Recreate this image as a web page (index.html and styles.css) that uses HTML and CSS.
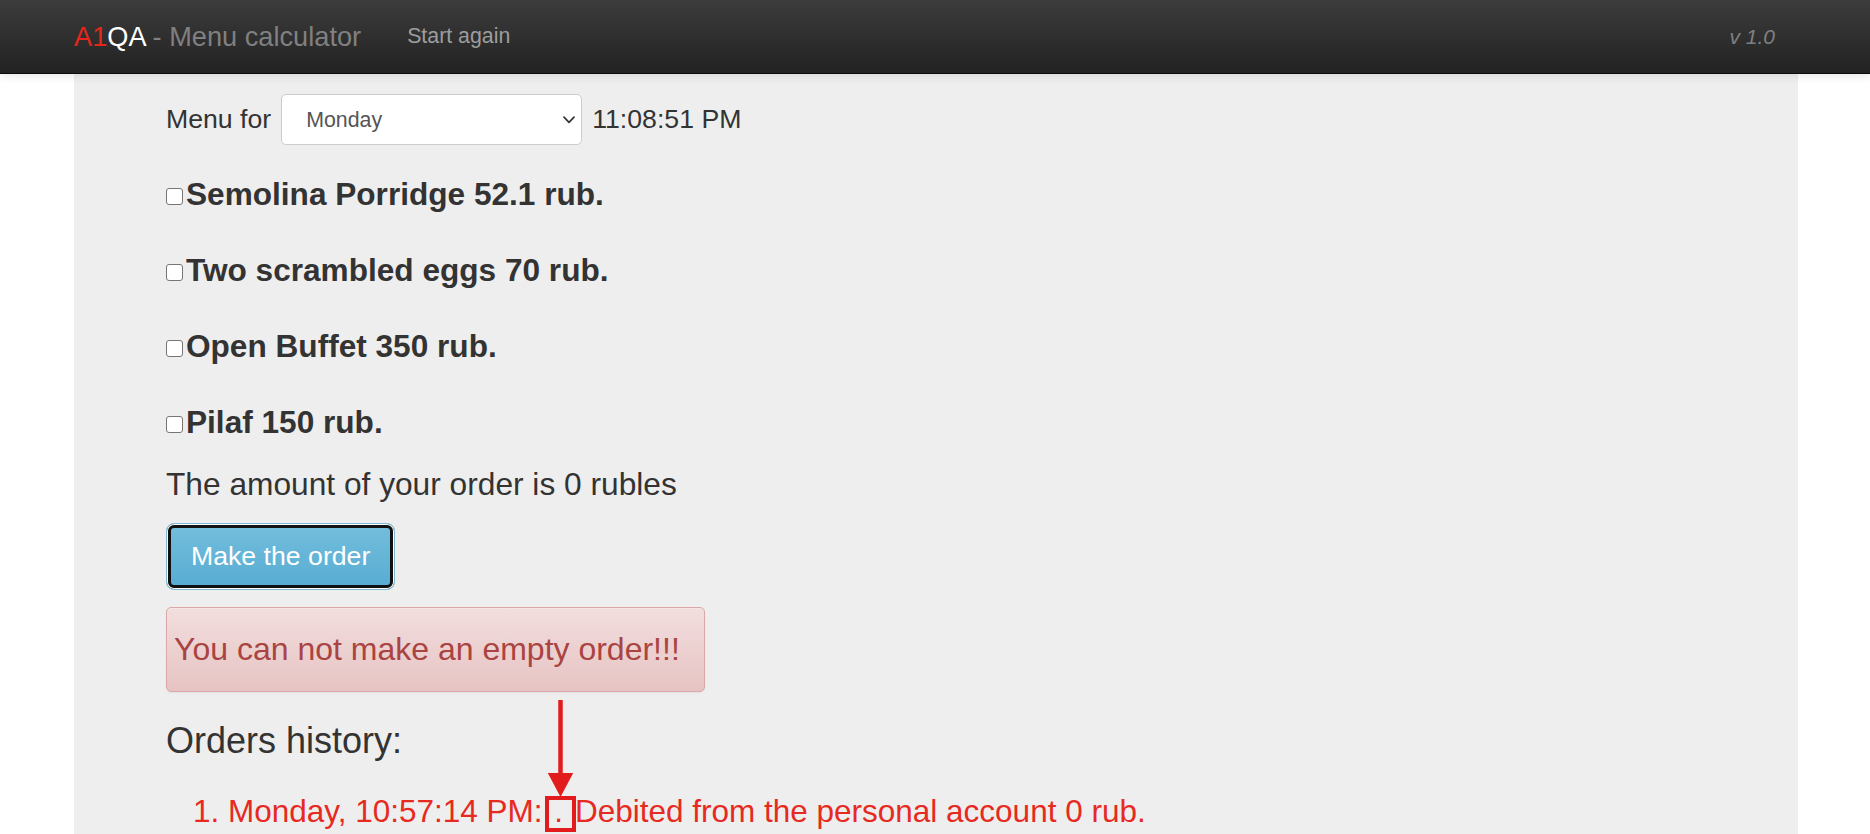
FILE: index.html
```html
<!DOCTYPE html>
<html lang="en">
<head>
<meta charset="utf-8">
<title>A1QA - Menu calculator</title>
<link rel="stylesheet" href="styles.css">
</head>
<body>
<header class="navbar">
  <div class="nav-inner">
    <a class="brand"><span class="a1">A1</span><span class="qa">QA</span> - Menu calculator</a>
    <a class="nav-link">Start again</a>
    <span class="version">v 1.0</span>
  </div>
</header>
<main class="page">
  <div class="menu-row">
    <span>Menu for</span>
    <span class="select-wrap">
      <select class="day-select">
        <option>Monday</option>
        <option>Tuesday</option>
        <option>Wednesday</option>
        <option>Thursday</option>
        <option>Friday</option>
      </select>
      <svg class="chevron" width="12" height="8" viewBox="0 0 12 8" aria-hidden="true"><path d="M1 1.2 L6 6.4 L11 1.2" fill="none" stroke="#333" stroke-width="1.7" stroke-linecap="round" stroke-linejoin="round"/></svg>
    </span>
    <span>11:08:51 PM</span>
  </div>
  <ul class="dishes">
    <li class="dish"><input type="checkbox"><span>Semolina Porridge 52.1 rub.</span></li>
    <li class="dish"><input type="checkbox"><span>Two scrambled eggs 70 rub.</span></li>
    <li class="dish"><input type="checkbox"><span>Open Buffet 350 rub.</span></li>
    <li class="dish"><input type="checkbox"><span>Pilaf 150 rub.</span></li>
  </ul>
  <p class="amount">The amount of your order is 0 rubles</p>
  <button class="btn-order">Make the order</button>
  <div class="alert">You can not make an empty order!!!</div>
  <h3 class="history-title">Orders history:</h3>
  <ol class="history">
    <li>Monday, 10:57:14 PM: <span class="dot">.</span> Debited from the personal account 0 rub.</li>
  </ol>
</main>
<svg class="annotation" width="1870" height="834" viewBox="0 0 1870 834" aria-hidden="true">
  <line x1="560.5" y1="700" x2="560.5" y2="777" stroke="#e21c1c" stroke-width="4.5"/>
  <polygon points="547.8,773 573.2,773 560.5,797" fill="#e21c1c"/>
  <rect x="547" y="798" width="27" height="32" fill="none" stroke="#e21c1c" stroke-width="4"/>
</svg>
</body>
</html>
```

FILE: styles.css
```css
html, body {
  margin: 0;
  padding: 0;
}

body {
  font-family: "Liberation Sans", Arial, sans-serif;
  color: #333;
  background: #fff;
  height: 834px;
  overflow: hidden;
  display: flex;
  flex-direction: column;
}

.navbar {
  flex: none;
  height: 73px;
  border-bottom: 1px solid #0b0b0b;
  background: linear-gradient(#3c3c3c, #222222);
  box-shadow: 0 1px 10px rgba(0, 0, 0, 0.12);
  position: relative;
  z-index: 2;
}

.nav-inner {
  height: 100%;
  display: flex;
  align-items: center;
  padding: 0 95px 0 74px;
}

.brand {
  font-size: 27.2px;
  color: #808080;
  white-space: pre;
}

.a1 {
  color: #e4261b;
}

.qa {
  color: #ffffff;
}

.nav-link {
  margin-left: 46px;
  font-size: 21.33px;
  color: #9d9d9d;
}

.version {
  margin-left: auto;
  font-size: 21px;
  font-style: italic;
  color: #808080;
}

.page {
  flex: 1;
  margin: 0 72px 0 74px;
  background: #eeeeee;
  padding: 20px 0 0 92px;
}

.menu-row {
  display: flex;
  align-items: center;
  height: 51px;
  font-size: 26.67px;
}

.select-wrap {
  position: relative;
  display: inline-flex;
  margin: 0 10px;
}

.day-select {
  -webkit-appearance: none;
  appearance: none;
  width: 301px;
  height: 51px;
  box-sizing: border-box;
  padding: 0 30px 0 24px;
  border: 1px solid #cccccc;
  border-radius: 5px;
  background-color: #ffffff;
  color: #555555;
  font-family: "Liberation Sans", Arial, sans-serif;
  font-size: 21.33px;
}

.chevron {
  position: absolute;
  right: 7px;
  top: 22px;
  pointer-events: none;
}

.dishes {
  list-style: none;
  margin: 29.6px 0 0;
  padding: 0;
  display: flex;
  flex-direction: column;
  gap: 36px;
}

.dish {
  display: flex;
  align-items: center;
  height: 40px;
  font-size: 31.6px;
  font-weight: bold;
}

.dish input {
  -webkit-appearance: none;
  appearance: none;
  flex: none;
  width: 17px;
  height: 17px;
  box-sizing: border-box;
  margin: 3px 3px 0 0;
  border: 1px solid #767676;
  border-radius: 3px;
  background: #ffffff;
}

.amount {
  margin: 21.4px 0 0;
  font-size: 31.7px;
  line-height: 40px;
}

.btn-order {
  display: block;
  margin-top: 19.3px;
  padding: 14px 24px;
  font-family: "Liberation Sans", Arial, sans-serif;
  font-size: 26.67px;
  line-height: 37px;
  color: #ffffff;
  background: linear-gradient(#74bedc, #57acd2);
  border: 1px solid #7fb8d0;
  border-radius: 8px;
  box-shadow: inset 0 0 0 1px #ffffff, inset 0 0 0 4px #111111;
}

.alert {
  margin-top: 16.7px;
  width: 539px;
  height: 85px;
  box-sizing: border-box;
  display: flex;
  align-items: center;
  padding: 0 7px;
  font-size: 32px;
  color: #a94442;
  background: linear-gradient(#f2dede, #e7c3c3);
  border: 1px solid #dca7a7;
  border-radius: 5px;
  box-shadow: inset 0 1px 0 rgba(255, 255, 255, 0.25), 0 1px 2px rgba(0, 0, 0, 0.05);
}

.history-title {
  margin: 29px 0 0;
  font-size: 36px;
  font-weight: normal;
  line-height: 40px;
}

.history {
  margin: 29.6px 0 0;
  padding-left: 62px;
  font-size: 31.5px;
  line-height: 40px;
  color: #e62a1f;
}

.dot {
  margin: 0 3px;
}

.annotation {
  position: absolute;
  left: 0;
  top: 0;
  pointer-events: none;
}
```
